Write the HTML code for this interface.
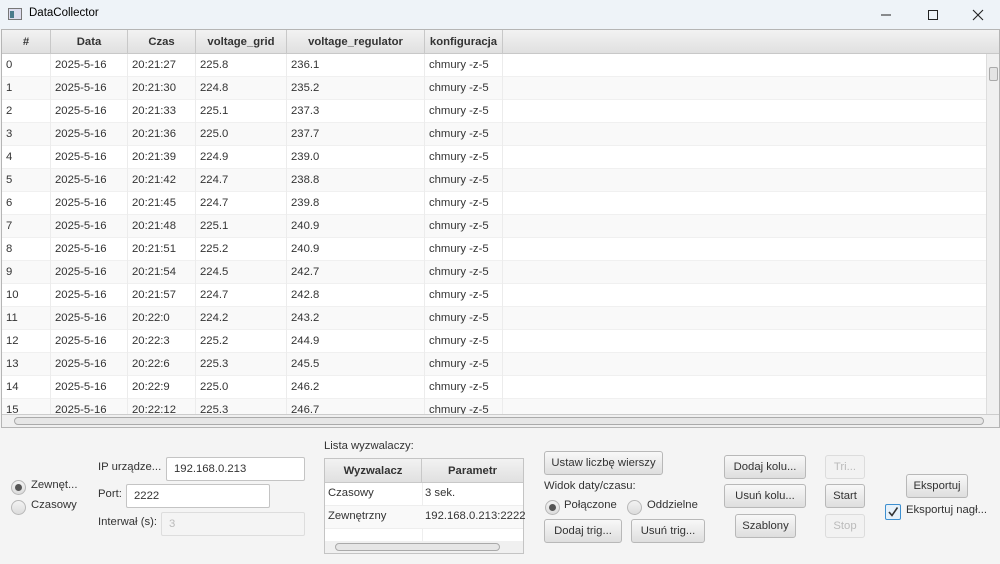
<!DOCTYPE html>
<html><head><meta charset="utf-8"><style>
*{box-sizing:border-box;margin:0;padding:0}
body{width:1000px;height:564px;overflow:hidden;background:#f4f4f4;font-family:"Segoe UI","Liberation Sans","DejaVu Sans",sans-serif;font-size:11.3px;color:#333;position:relative}
.abs{position:absolute}
#title{left:0;top:0;width:1000px;height:29px;background:#eef3f8;}
#title .t{left:29px;top:7px;font-size:11.5px;color:#000}
#tbl{left:1px;top:29px;width:999px;height:399px;background:#fff;border:1px solid #b5b5b5;overflow:hidden}
.hdr{position:absolute;left:0;top:0;height:24px;width:100%;background:linear-gradient(#f2f2f2,#e0e0e0);border-bottom:1px solid #c8c8c8}
.hc{position:absolute;top:0;height:24px;line-height:24px;text-align:center;font-weight:bold;color:#333;border-right:1px solid #c8c8c8;font-size:11.3px}
.row{position:absolute;left:0;width:985px;height:23px;border-bottom:1px solid #f0f0f0}
.row.o{background:#f9f9f9}
.c{position:absolute;top:0;height:23px;line-height:23px;padding-left:4px;border-right:1px solid #ececec;font-size:11.3px;color:#333}
.btn{position:absolute;height:24px;line-height:22px;border:1px solid #b8b8b8;border-radius:3px;background:linear-gradient(#f8f8f8,#dedede);text-align:center;font-size:11.3px;color:#333;white-space:nowrap}
.dis{color:#bbb;border-color:#dcdcdc;background:#f2f2f2}
.inp{position:absolute;height:24px;border:1px solid #c4c4c4;border-radius:2px;background:#fff;padding-left:7px;line-height:22px;font-size:11.3px}
.rad{position:absolute;width:15px;height:15px;border-radius:50%;border:1px solid #b8b8b8;background:linear-gradient(#f3f3f3,#dcdcdc)}
.rad.on::after{content:"";position:absolute;left:3px;top:3px;width:7px;height:7px;border-radius:50%;background:#555}
.lbl{position:absolute;font-size:11.3px;color:#333;white-space:nowrap}
</style></head><body>
<div id="title" class="abs">
 <svg class="abs" style="left:8px;top:8px" width="14" height="12"><rect x="0.5" y="0.5" width="13" height="11" fill="#dde" stroke="#777"/><rect x="2" y="3" width="4" height="7" fill="#4a7a8c"/></svg>
 <div class="abs t">DataCollector</div>
 <svg class="abs" style="left:880px;top:8px" width="110" height="14"><line x1="1" y1="7" x2="11" y2="7" stroke="#222"/><rect x="48.5" y="2.5" width="9" height="9" fill="none" stroke="#222"/><path d="M93 2 L103 12 M103 2 L93 12" stroke="#222" stroke-width="1.1"/></svg>
</div>
<div id="tbl" class="abs">
 <div class="hdr">
  <div class="hc" style="left:0;width:49px">#</div>
  <div class="hc" style="left:49px;width:77px">Data</div>
  <div class="hc" style="left:126px;width:68px">Czas</div>
  <div class="hc" style="left:194px;width:91px">voltage_grid</div>
  <div class="hc" style="left:285px;width:138px">voltage_regulator</div>
  <div class="hc" style="left:423px;width:78px">konfiguracja</div>
 </div>
 <div id="rows"></div>
 <div class="abs" style="left:984px;top:24px;width:14px;height:360px;background:#f0f0f0;border-left:1px solid #ddd">
  <div class="abs" style="left:2px;top:13px;width:9px;height:14px;border:1px solid #aaa;border-radius:2px;background:#e4e4e4"></div>
 </div>
 <div class="abs" style="left:0;top:384px;width:998px;height:13px;background:#f0f0f0;border-top:1px solid #ccc">
  <div class="abs" style="left:12px;top:2px;width:970px;height:8px;border:1px solid #aaa;border-radius:4px;background:#e6e6e6"></div>
 </div>
</div>

<div class="rad on" style="left:11px;top:480px"></div><div class="lbl" style="left:31px;top:479px">Zewnęt...</div>
<div class="rad" style="left:11px;top:500px"></div><div class="lbl" style="left:31px;top:499px">Czasowy</div>
<div class="lbl" style="left:98px;top:461px">IP urządze...</div>
<div class="inp" style="left:166px;top:457px;width:139px">192.168.0.213</div>
<div class="lbl" style="left:98px;top:488px">Port:</div>
<div class="inp" style="left:126px;top:484px;width:144px">2222</div>
<div class="lbl" style="left:98px;top:516px">Interwał (s):</div>
<div class="inp" style="left:161px;top:512px;width:144px;background:#f4f4f4;color:#bbb;border-color:#ddd">3</div>

<div class="lbl" style="left:324px;top:440px">Lista wyzwalaczy:</div>
<div class="abs" style="left:324px;top:458px;width:200px;height:96px;border:1px solid #c4c4c4;background:#fff">
 <div class="abs" style="left:0;top:0;width:198px;height:24px;background:linear-gradient(#f2f2f2,#e0e0e0);border-bottom:1px solid #c8c8c8"></div>
 <div class="abs" style="left:0;top:0;width:97px;height:24px;line-height:24px;text-align:center;font-weight:bold;border-right:1px solid #c8c8c8">Wyzwalacz</div>
 <div class="abs" style="left:97px;top:0;width:101px;height:24px;line-height:24px;text-align:center;font-weight:bold">Parametr</div>
 <div class="abs" style="left:0;top:24px;width:198px;height:23px;border-bottom:1px solid #eee"></div>
 <div class="abs" style="left:97px;top:24px;height:58px;border-left:1px solid #eee"></div>
 <div class="lbl" style="left:3px;top:28px">Czasowy</div><div class="lbl" style="left:100px;top:28px">3 sek.</div>
 <div class="abs" style="left:0;top:47px;width:198px;height:23px;background:#f9f9f9;border-bottom:1px solid #eee"></div>
 <div class="lbl" style="left:3px;top:51px">Zewnętrzny</div><div class="lbl" style="left:100px;top:51px">192.168.0.213:2222</div>
 <div class="abs" style="left:0;top:82px;width:198px;height:12px;background:#f0f0f0"><div class="abs" style="left:10px;top:2px;width:165px;height:8px;border:1px solid #aaa;border-radius:4px;background:#e6e6e6"></div></div>
</div>

<div class="btn" style="left:544px;top:451px;width:119px">Ustaw liczbę wierszy</div>
<div class="lbl" style="left:544px;top:480px">Widok daty/czasu:</div>
<div class="rad on" style="left:545px;top:500px"></div><div class="lbl" style="left:564px;top:499px">Połączone</div>
<div class="rad" style="left:627px;top:500px"></div><div class="lbl" style="left:647px;top:499px">Oddzielne</div>
<div class="btn" style="left:544px;top:519px;width:78px">Dodaj trig...</div>
<div class="btn" style="left:631px;top:519px;width:74px">Usuń trig...</div>

<div class="btn" style="left:724px;top:455px;width:82px">Dodaj kolu...</div>
<div class="btn" style="left:724px;top:484px;width:82px">Usuń kolu...</div>
<div class="btn" style="left:735px;top:514px;width:61px">Szablony</div>

<div class="btn dis" style="left:825px;top:455px;width:40px">Tri...</div>
<div class="btn" style="left:825px;top:484px;width:40px">Start</div>
<div class="btn dis" style="left:825px;top:514px;width:40px">Stop</div>

<div class="btn" style="left:906px;top:474px;width:62px">Eksportuj</div>
<div class="abs" style="left:885px;top:504px;width:16px;height:16px;border:1px solid #3c8fd0;border-radius:2px;background:#e6f1fa">
 <svg width="14" height="14" style="position:absolute;left:0;top:0"><path d="M3 7 L6 10.5 L11.5 2.5" fill="none" stroke="#333" stroke-width="1.6"/></svg></div>
<div class="lbl" style="left:906px;top:504px">Eksportuj nagł...</div>

<script>
var d=[["20:21:27","225.8","236.1"],["20:21:30","224.8","235.2"],["20:21:33","225.1","237.3"],["20:21:36","225.0","237.7"],["20:21:39","224.9","239.0"],["20:21:42","224.7","238.8"],["20:21:45","224.7","239.8"],["20:21:48","225.1","240.9"],["20:21:51","225.2","240.9"],["20:21:54","224.5","242.7"],["20:21:57","224.7","242.8"],["20:22:0","224.2","243.2"],["20:22:3","225.2","244.9"],["20:22:6","225.3","245.5"],["20:22:9","225.0","246.2"],["20:22:12","225.3","246.7"]];
var h="";
for(var i=0;i<d.length;i++){
 h+='<div class="row'+(i%2?' o':'')+'" style="top:'+(24+i*23)+'px">'+
 '<div class="c" style="left:0;width:49px">'+i+'</div>'+
 '<div class="c" style="left:49px;width:77px">2025-5-16</div>'+
 '<div class="c" style="left:126px;width:68px">'+d[i][0]+'</div>'+
 '<div class="c" style="left:194px;width:91px">'+d[i][1]+'</div>'+
 '<div class="c" style="left:285px;width:138px">'+d[i][2]+'</div>'+
 '<div class="c" style="left:423px;width:78px">chmury -z-5</div></div>';
}
document.getElementById("rows").innerHTML=h;
</script>
</body></html>
